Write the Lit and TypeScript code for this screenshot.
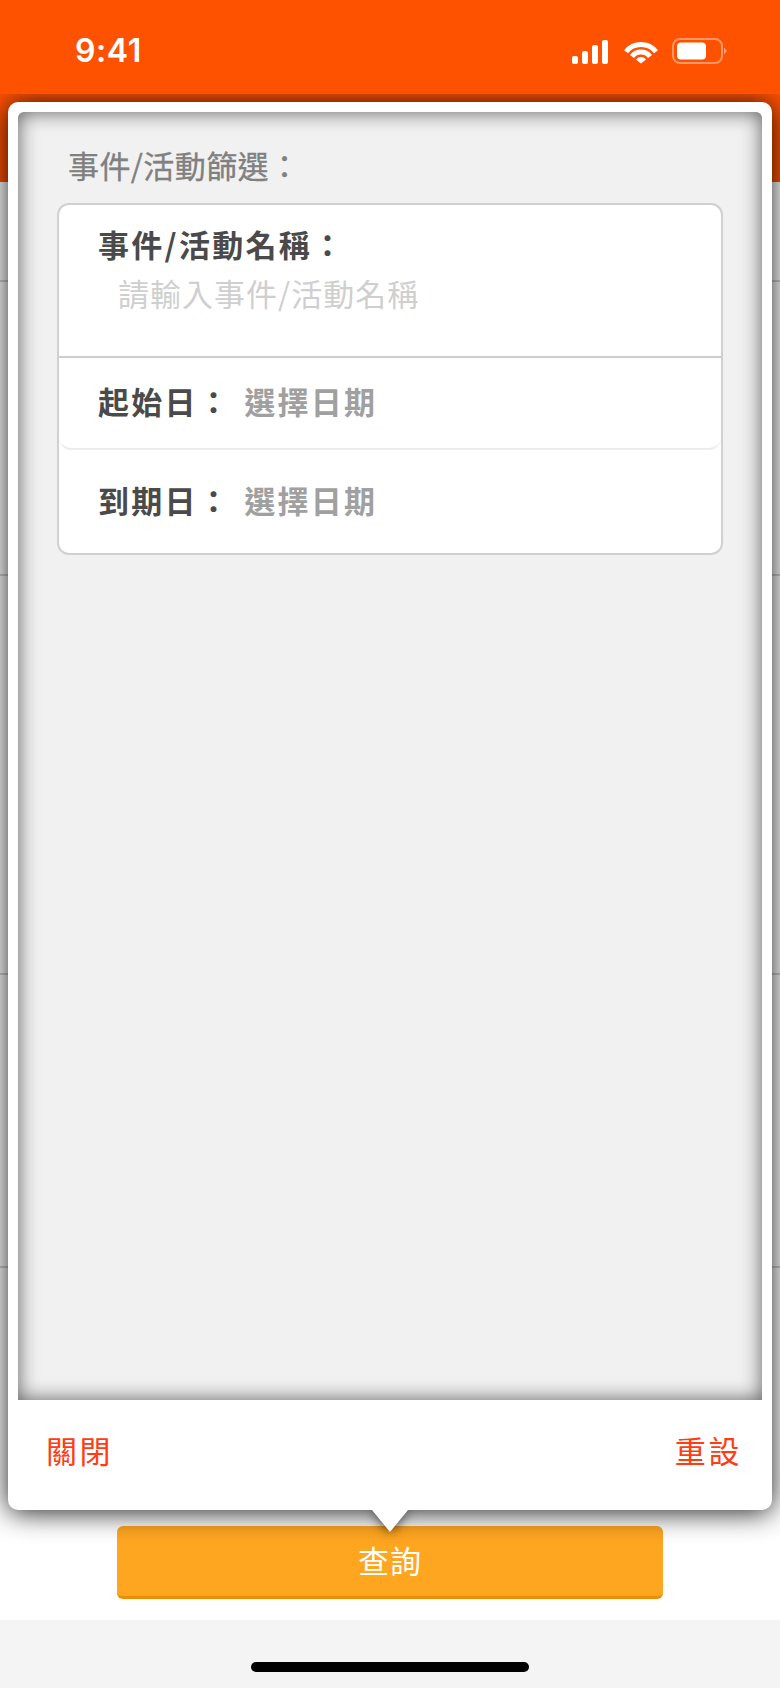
import { LitElement, html, css } from "lit";
import { customElement } from "lit/decorators.js";

@customElement("app-root")
export class AppRoot extends LitElement {
  static styles = css`
    :host {
      display: block;
      position: relative;
      width: 780px;
      height: 1688px;
      overflow: hidden;
      background: #fff;
      font-family: "Noto Sans CJK TC", "Noto Sans", sans-serif;
    }
    .page { display: flex; flex-direction: column; height: 100%; }
    .header { height: 182px; background: #ff5200; flex: none; }
    .status {
      display: flex; align-items: center; justify-content: space-between;
      height: 100px; padding: 0 52px 0 75px; box-sizing: border-box; color: #fff;
    }
    .time { font-family: Inter, sans-serif; font-size: 32px; font-weight: 600; line-height: 40px; letter-spacing: 0.6px; margin-top: 2px; }
    .icons { display: flex; align-items: flex-end; height: 26px; margin-top: 2px; }
    .icons svg { display: block; }
    .sig { margin-right: 16px; }
    .wifi { margin-right: 14px; }
    .list { flex: 1; display: grid; grid-template-rows: 100px 294px 399px 293px 1fr; }
    .list div { border-bottom: 2px solid #d2d2d2; }
    .list div:last-child { border-bottom: 0; }
    .action { flex: none; height: 94px; box-sizing: border-box; padding: 0 117px 21px; }
    .query {
      height: 73px; background: #ffa620; border-bottom: 3px solid #f08c00; border-radius: 6px;
      box-sizing: border-box; color: #fff; font-size: 31px; letter-spacing: 1px; line-height: 67px; text-align: center;
    }
    .bottom { flex: none; height: 68px; background: #f4f4f4; display: flex; justify-content: center; padding-top: 42px; box-sizing: border-box; }
    .home { width: 278px; height: 10px; border-radius: 5px; background: #000; }

    .overlay { position: absolute; inset: 94px 0 0 0; overflow: hidden; }
    .modal {
      position: absolute; left: 8px; top: 8px; width: 764px; height: 1408px; box-sizing: border-box;
      background: #fff; border-radius: 10px; padding: 10px;
      box-shadow: 0 2px 28px rgba(0, 0, 0, 0.9);
      display: flex; flex-direction: column;
    }
    .arrow { position: absolute; left: 342px; top: 100%; display: block; }
    .arrow polygon { filter: drop-shadow(0 0 6px rgba(0, 0, 0, 0.75)); }
    .panel {
      flex: 1; background: #f1f1f1; border-radius: 6px 6px 0 0;
      box-shadow: inset 0 0 20px rgba(0, 0, 0, 0.62);
    }
    .title {
      font-size: 31px; letter-spacing: 0.4px; line-height: 40px; color: #808080;
      -webkit-text-stroke: 0.3px #808080; padding: 33px 0 18px 50px;
    }
    .card { margin: 0 39px; background: #fff; border: 2px solid #d0d0d0; border-radius: 12px; box-sizing: border-box; height: 352px; display: flex; flex-direction: column; }
    .name { height: 151px; flex: none; padding: 17px 0 0 39px; box-sizing: border-box; }
    .lbl { font-size: 31px; font-weight: 700; letter-spacing: 2.3px; line-height: 44px; color: #4a4a4a; }
    .ph { font-size: 31px; letter-spacing: 1px; line-height: 44px; color: #cfcfcf; margin: 5px 0 0 20px; }
    .sep { height: 2px; flex: none; background: #cdcdcd; }
    .row { display: flex; align-items: center; padding-left: 39px; box-sizing: border-box; }
    .r2 { height: 92px; flex: none; padding-bottom: 4px; border-bottom: 2px solid #ececec; border-radius: 0 0 12px 12px; }
    .r3 { flex: 1; padding-bottom: 4px; }
    .val { font-size: 31px; font-weight: 700; letter-spacing: 2.3px; line-height: 44px; color: #a0a0a0; margin-left: 13px; }
    .foot {
      flex: none; height: 100px; background: #fff; display: flex; justify-content: space-between; align-items: center;
      padding: 0 20px 2px 28px; box-sizing: border-box; color: #ff3c12; font-size: 31px; letter-spacing: 2.6px;
      border-radius: 0 0 5px 5px;
    }
  `;

  render() {
    return html`
      <div class="page">
        <div class="header">
          <div class="status">
            <div class="time">9:41</div>
            <div class="icons">
              <svg class="sig" width="36" height="24" viewBox="0 0 36 24" fill="#fff">
                <rect x="0" y="16" width="6" height="8" rx="2"></rect>
                <rect x="10" y="11" width="6" height="13" rx="2"></rect>
                <rect x="20" y="5" width="6" height="19" rx="2"></rect>
                <rect x="30" y="0" width="6" height="24" rx="2"></rect>
              </svg>
              <svg class="wifi" width="34" height="22" viewBox="0 0 34 22" fill="#fff">
                <path d="M2.03 9.8A19 19 0 0 1 31.97 9.8" fill="none" stroke="#fff" stroke-width="5"></path>
                <path d="M7.94 14.42A11.5 11.5 0 0 1 26.06 14.42" fill="none" stroke="#fff" stroke-width="5"></path>
                <path d="M17 21.5L11.9 17.5A6.5 6.5 0 0 1 22.1 17.5Z"></path>
              </svg>
              <svg width="56" height="26" viewBox="0 0 56 26" fill="#fff">
                <rect x="1" y="1" width="49" height="24" rx="7" fill="none" stroke="#fff" stroke-opacity="0.4" stroke-width="2"></rect>
                <rect x="5" y="4.5" width="29" height="17" rx="4"></rect>
                <path d="M52 9.5L55 13L52 16.5Z" fill-opacity="0.45"></path>
              </svg>
            </div>
          </div>
        </div>
        <div class="list"><div></div><div></div><div></div><div></div><div></div></div>
        <div class="action"><div class="query">查詢</div></div>
        <div class="bottom"><div class="home"></div></div>
      </div>
      <div class="overlay">
        <div class="modal">
          <div class="panel">
            <div class="title">事件/活動篩選：</div>
            <div class="card">
              <div class="name">
                <div class="lbl">事件/活動名稱：</div>
                <div class="ph">請輸入事件/活動名稱</div>
              </div>
              <div class="sep"></div>
              <div class="row r2"><span class="lbl">起始日：</span><span class="val">選擇日期</span></div>
              <div class="row r3"><span class="lbl">到期日：</span><span class="val">選擇日期</span></div>
            </div>
          </div>
          <div class="foot"><span>關閉</span><span>重設</span></div>
          <svg class="arrow" width="80" height="40" viewBox="0 0 80 40">
            <polygon points="22,0 58,0 40,22" fill="#fff"></polygon>
          </svg>
        </div>
      </div>
    `;
  }
}
